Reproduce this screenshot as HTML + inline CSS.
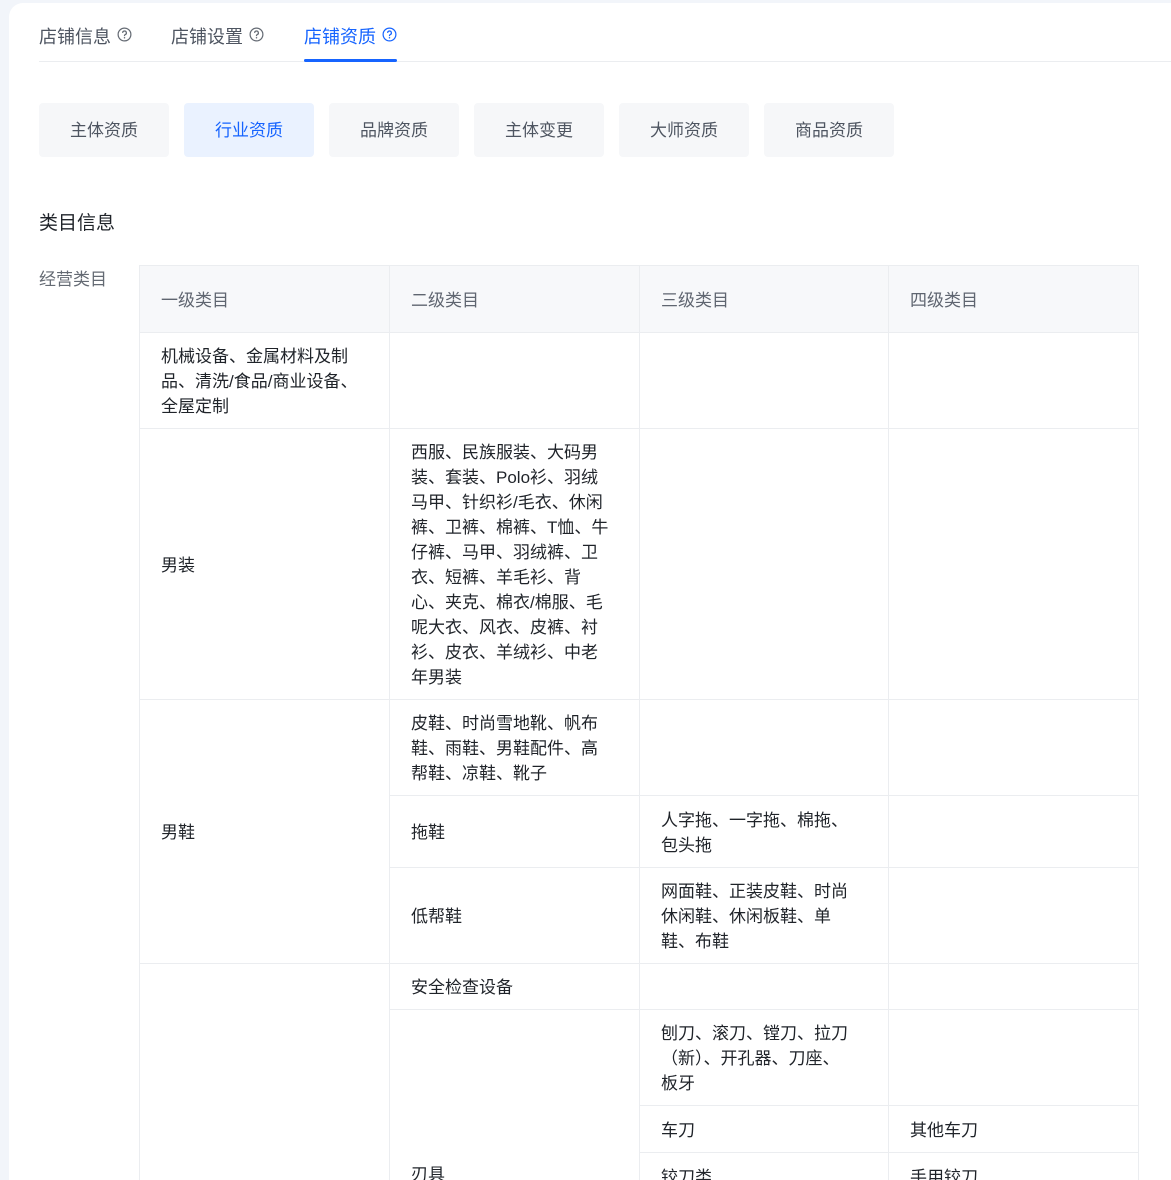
<!DOCTYPE html>
<html style="width:1171px;height:1180px;overflow:hidden"><head><meta charset="utf-8">
<style>
*{margin:0;padding:0;box-sizing:border-box}
body{width:1171px;height:1180px;overflow:hidden;background:#f2f5fa;font-family:"Liberation Sans","Noto Sans CJK SC",sans-serif;position:relative}
#w{position:absolute;left:0;top:0;width:1171px;height:1180px;overflow:hidden}
.card{position:absolute;left:9px;top:3px;width:1200px;height:1300px;background:#fff;border-radius:14px}
.a{position:absolute}
.tab{position:absolute;top:24px;font-size:18px;color:#4e5561;line-height:26px;white-space:nowrap}
.tab svg{vertical-align:1px;margin-left:6px}
.btn{position:absolute;top:103px;width:130px;height:54px;border-radius:4px;background:#f6f7f9;color:#4e5561;font-size:17px;text-align:center;line-height:56px}
.c{position:absolute;display:flex;align-items:center;padding-left:21px;padding-top:2px;font-size:17px;line-height:25px;color:#1f2329;border-right:1px solid #ebedf0;border-bottom:1px solid #ebedf0;white-space:nowrap}
.h{background:#f7f8fa;color:#5f6570}
</style></head><body><div id="w">
<div class="card"></div>
<div class="tab" style="left:39px">店铺信息<svg width="15" height="15" viewBox="0 0 16 16"><circle cx="8" cy="8" r="6.8" fill="none" stroke="#646a73" stroke-width="1.3"/><path d="M6 6.3a2 2 0 1 1 2.6 1.9c-.4.2-.6.5-.6.9v.6" fill="none" stroke="#646a73" stroke-width="1.3"/><circle cx="8" cy="11.4" r=".8" fill="#646a73"/></svg></div>
<div class="tab" style="left:171px">店铺设置<svg width="15" height="15" viewBox="0 0 16 16"><circle cx="8" cy="8" r="6.8" fill="none" stroke="#646a73" stroke-width="1.3"/><path d="M6 6.3a2 2 0 1 1 2.6 1.9c-.4.2-.6.5-.6.9v.6" fill="none" stroke="#646a73" stroke-width="1.3"/><circle cx="8" cy="11.4" r=".8" fill="#646a73"/></svg></div>
<div class="tab" style="left:304px;color:#1664ff">店铺资质<svg width="15" height="15" viewBox="0 0 16 16"><circle cx="8" cy="8" r="6.8" fill="none" stroke="#1664ff" stroke-width="1.3"/><path d="M6 6.3a2 2 0 1 1 2.6 1.9c-.4.2-.6.5-.6.9v.6" fill="none" stroke="#1664ff" stroke-width="1.3"/><circle cx="8" cy="11.4" r=".8" fill="#1664ff"/></svg></div>
<div class="a" style="left:39px;top:61px;width:1140px;height:1px;background:#ebedf0"></div>
<div class="a" style="left:304px;top:59px;width:93px;height:3px;background:#1664ff;border-radius:2px"></div>

<div class="btn" style="left:39px">主体资质</div>
<div class="btn" style="left:184px;background:#eaf2ff;color:#1664ff">行业资质</div>
<div class="btn" style="left:329px">品牌资质</div>
<div class="btn" style="left:474px">主体变更</div>
<div class="btn" style="left:619px">大师资质</div>
<div class="btn" style="left:764px">商品资质</div>

<div class="a" style="left:39px;top:211px;font-size:19px;color:#1f2329;line-height:26px">类目信息</div>
<div class="a" style="left:39px;top:267px;font-size:17px;color:#646a73;line-height:26px">经营类目</div>

<div class="a" style="left:139px;top:265px;width:1000px;height:1000px;border-left:1px solid #ebedf0;border-top:1px solid #ebedf0"></div>
<div class="c h" style="left:140px;top:266px;width:250px;height:67px">一级类目</div>
<div class="c h" style="left:390px;top:266px;width:250px;height:67px">二级类目</div>
<div class="c h" style="left:640px;top:266px;width:249px;height:67px">三级类目</div>
<div class="c h" style="left:889px;top:266px;width:250px;height:67px">四级类目</div>
<div class="c" style="left:140px;top:333px;width:250px;height:96px">机械设备、金属材料及制<br>品、清洗/食品/商业设备、<br>全屋定制</div>
<div class="c" style="left:140px;top:429px;width:250px;height:271px">男装</div>
<div class="c" style="left:140px;top:700px;width:250px;height:264px">男鞋</div>
<div class="c" style="left:140px;top:964px;width:250px;height:400px"></div>
<div class="c" style="left:390px;top:333px;width:250px;height:96px"></div>
<div class="c" style="left:390px;top:429px;width:250px;height:271px">西服、民族服装、大码男<br>装、套装、Polo衫、羽绒<br>马甲、针织衫/毛衣、休闲<br>裤、卫裤、棉裤、T恤、牛<br>仔裤、马甲、羽绒裤、卫<br>衣、短裤、羊毛衫、背<br>心、夹克、棉衣/棉服、毛<br>呢大衣、风衣、皮裤、衬<br>衫、皮衣、羊绒衫、中老<br>年男装</div>
<div class="c" style="left:390px;top:700px;width:250px;height:96px">皮鞋、时尚雪地靴、帆布<br>鞋、雨鞋、男鞋配件、高<br>帮鞋、凉鞋、靴子</div>
<div class="c" style="left:390px;top:796px;width:250px;height:72px">拖鞋</div>
<div class="c" style="left:390px;top:868px;width:250px;height:96px">低帮鞋</div>
<div class="c" style="left:390px;top:964px;width:250px;height:46px">安全检查设备</div>
<div class="c" style="left:390px;top:1010px;width:250px;height:328px">刃具</div>
<div class="c" style="left:640px;top:333px;width:249px;height:96px"></div>
<div class="c" style="left:640px;top:429px;width:249px;height:271px"></div>
<div class="c" style="left:640px;top:700px;width:249px;height:96px"></div>
<div class="c" style="left:640px;top:796px;width:249px;height:72px">人字拖、一字拖、棉拖、<br>包头拖</div>
<div class="c" style="left:640px;top:868px;width:249px;height:96px">网面鞋、正装皮鞋、时尚<br>休闲鞋、休闲板鞋、单<br>鞋、布鞋</div>
<div class="c" style="left:640px;top:964px;width:249px;height:46px"></div>
<div class="c" style="left:640px;top:1010px;width:249px;height:96px">刨刀、滚刀、镗刀、拉刀<br>（新）、开孔器、刀座、<br>板牙</div>
<div class="c" style="left:640px;top:1106px;width:249px;height:47px">车刀</div>
<div class="c" style="left:640px;top:1153px;width:249px;height:47px">铰刀类</div>
<div class="c" style="left:889px;top:333px;width:250px;height:96px"></div>
<div class="c" style="left:889px;top:429px;width:250px;height:271px"></div>
<div class="c" style="left:889px;top:700px;width:250px;height:96px"></div>
<div class="c" style="left:889px;top:796px;width:250px;height:72px"></div>
<div class="c" style="left:889px;top:868px;width:250px;height:96px"></div>
<div class="c" style="left:889px;top:964px;width:250px;height:46px"></div>
<div class="c" style="left:889px;top:1010px;width:250px;height:96px"></div>
<div class="c" style="left:889px;top:1106px;width:250px;height:47px">其他车刀</div>
<div class="c" style="left:889px;top:1153px;width:250px;height:47px">手用铰刀</div>
</div></body></html>
